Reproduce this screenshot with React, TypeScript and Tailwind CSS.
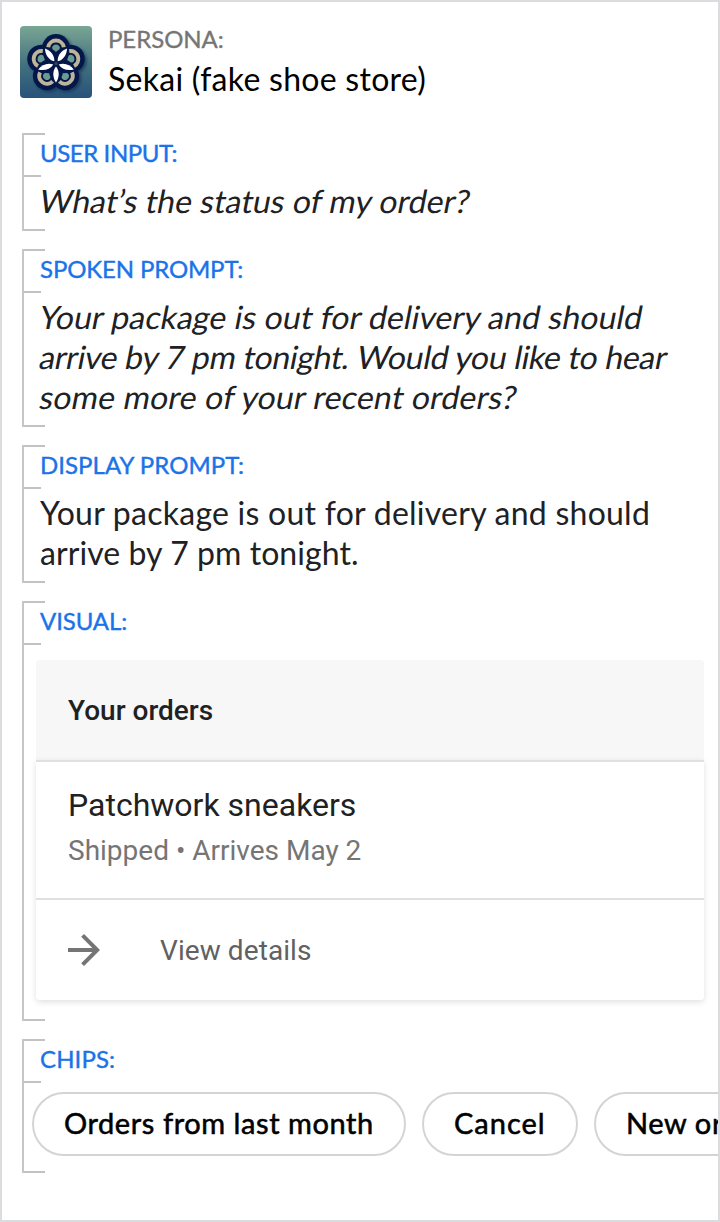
import type { ReactNode } from "react";

const SPOKES = [0, 72, 144, 216, 288];

function SekaiLogo() {
  return (
    <svg viewBox="0 0 72 72" className="size-[72px] shrink-0 rounded" aria-hidden="true">
      <defs>
        <linearGradient id="sky" x1="0" y1="0" x2="0" y2="1">
          <stop offset="0" stopColor="#7aa694" />
          <stop offset="0.55" stopColor="#41707f" />
          <stop offset="1" stopColor="#28527a" />
        </linearGradient>
        <filter id="soft" x="-20%" y="-20%" width="150%" height="150%">
          <feGaussianBlur stdDeviation="1.6" />
        </filter>
      </defs>
      <rect width="72" height="72" fill="url(#sky)" />
      <g transform="translate(38 39.5)" fill="#0b2345" opacity="0.6" filter="url(#soft)">
        {SPOKES.map((a) => (
          <circle key={a} cy="-15.5" r="14" transform={`rotate(${a})`} />
        ))}
      </g>
      <g transform="translate(36 37.6)">
        {SPOKES.map((a) => (
          <circle key={a} cy="-15.5" r="14" fill="#03174a" transform={`rotate(${a})`} />
        ))}
        {SPOKES.map((a) => (
          <g key={a} transform={`rotate(${a})`}>
            <path d="M-7.8 -16.4A7.9 7.9 0 0 1 7.8 -16.4" fill="none" stroke="#beb497" strokeWidth="4" />
            <path d="M0 -19.2C2.6 -19.2 4 -17.4 3.9 -15.6C3.8 -13.6 1.6 -13.6 0 -11.6C-1.6 -13.6 -3.8 -13.6 -3.9 -15.6C-4 -17.4 -2.6 -19.2 0 -19.2Z" fill="#6a9b90" />
          </g>
        ))}
        {SPOKES.map((a) => (
          <path
            key={a}
            d="M0 2.8C3.7 7.5 3.5 13.5 0 18.8C-3.5 13.5 -3.7 7.5 0 2.8Z"
            fill="#fff"
            transform={`rotate(${a})`}
          />
        ))}
      </g>
    </svg>
  );
}

function Section({ label, className, labelClass, children }: { label: string; className: string; labelClass: string; children: ReactNode }) {
  return (
    <section className={`flex flex-col border-l-2 border-[#c6c6c6] ${className}`}>
      <div className="h-0.5 w-[21px] shrink-0 bg-[#c2c2c2]" />
      <h2 className={`h-10 shrink-0 pl-4 text-2xl leading-[35px] text-[#1a73e8] [-webkit-text-stroke:0.4px_#1a73e8] ${labelClass}`}>{label}</h2>
      <div className="h-0.5 w-[17px] shrink-0 bg-[#c2c2c2]" />
      <div className="min-h-0 flex-1">{children}</div>
      <div className="h-0.5 w-[21px] shrink-0 bg-[#c2c2c2]" />
    </section>
  );
}

function Line({ className, children }: { className: string; children: ReactNode }) {
  return <span className={`block whitespace-nowrap ${className}`}>{children}</span>;
}

const bodyText = "pl-4 pt-1 text-[32px] leading-10 text-[#202124]";
const slanted = "-skew-x-[11deg] -translate-y-[0.5px]";

function Chip({ className, children }: { className: string; children: ReactNode }) {
  return (
    <button className={`h-16 shrink-0 rounded-full border-2 border-[#d4d4d4] bg-white pb-0.5 pl-[30px] text-left text-[29px] leading-[58px] whitespace-nowrap text-black [-webkit-text-stroke:0.55px_#000] ${className}`}>
      {children}
    </button>
  );
}

export default function App() {
  return (
    <main className="flex h-[1222px] w-[720px] flex-col gap-[18px] overflow-hidden border-2 border-[#dadce0] bg-white font-['Lato',sans-serif]">
      <header className="flex h-[113px] shrink-0 gap-4 pt-6 pl-[18px]">
        <SekaiLogo />
        <div className="whitespace-nowrap">
          <p className="text-2xl leading-[26px] tracking-[-0.05px] text-[#757575] [-webkit-text-stroke:0.35px_#757575]">PERSONA:</p>
          <h1 className="mt-[7px] text-[32px] leading-10 tracking-[0.28px] text-black">Sekai (fake shoe store)</h1>
        </div>
      </header>

      <Section label="USER INPUT:" className="ml-5 h-[98px]" labelClass="tracking-[-0.42px]">
        <p className={bodyText}>
          <Line className={`${slanted} tracking-[0.03px]`}>What’s the status of my order?</Line>
        </p>
      </Section>

      <Section label="SPOKEN PROMPT:" className="ml-5 h-[178px]" labelClass="tracking-[-0.14px]">
        <p className={bodyText}>
          <Line className={`${slanted} tracking-[0.08px]`}>Your package is out for delivery and should</Line>
          <Line className={`${slanted} tracking-[-0.3px]`}>arrive by 7 pm tonight. Would you like to hear</Line>
          <Line className={`${slanted} tracking-[0.18px]`}>some more of your recent orders?</Line>
        </p>
      </Section>

      <Section label="DISPLAY PROMPT:" className="ml-5 h-[138px]" labelClass="tracking-[0.04px]">
        <p className={bodyText}>
          <Line className="tracking-[0.25px]">Your package is out for delivery and should</Line>
          <Line className="tracking-[0.07px]">arrive by 7 pm tonight.</Line>
        </p>
      </Section>

      <Section label="VISUAL:" className="ml-5 h-[420px]" labelClass="tracking-[-0.1px]">
        <article className="mt-[15px] ml-3 w-[668px] font-['Roboto',sans-serif]">
          <h3 className="h-[100px] rounded-t bg-[#f7f7f7] pl-8 text-[28px] leading-[102px] font-medium text-[#212121]">Your orders</h3>
          <div className="rounded-b shadow-[0_2px_6px_rgba(0,0,0,0.13)]">
            <div className="h-[138px] border-t-2 border-[#e0e0e0] bg-white pt-[23px] pl-8">
              <p className="text-[32px] leading-10 text-[#212121]">Patchwork sneakers</p>
              <p className="mt-1.5 text-[28px] leading-10 text-[#757575]">Shipped • Arrives May 2</p>
            </div>
            <div className="flex h-[102px] items-center rounded-b border-t-2 border-[#e0e0e0] bg-white pl-8">
              <svg viewBox="0 0 32 32" className="size-8" fill="none" stroke="#757575" strokeWidth="4" aria-hidden="true">
                <path d="M0 16H29M14.6 1.4L29.2 16L14.6 30.6" />
              </svg>
              <span className="ml-[60px] pt-0.5 text-[28px] leading-10 tracking-[0.08px] text-[#616161]">View details</span>
            </div>
          </div>
        </article>
      </Section>

      <Section label="CHIPS:" className="ml-5 h-[134px]" labelClass="tracking-[0.1px]">
        <div className="flex gap-4 pt-[9px] pl-2">
          <Chip className="w-[374px] tracking-[0.57px]">Orders from last month</Chip>
          <Chip className="w-[156px] tracking-[1px]">Cancel</Chip>
          <Chip className="w-[220px] tracking-[0.6px]">New order</Chip>
        </div>
      </Section>
    </main>
  );
}
